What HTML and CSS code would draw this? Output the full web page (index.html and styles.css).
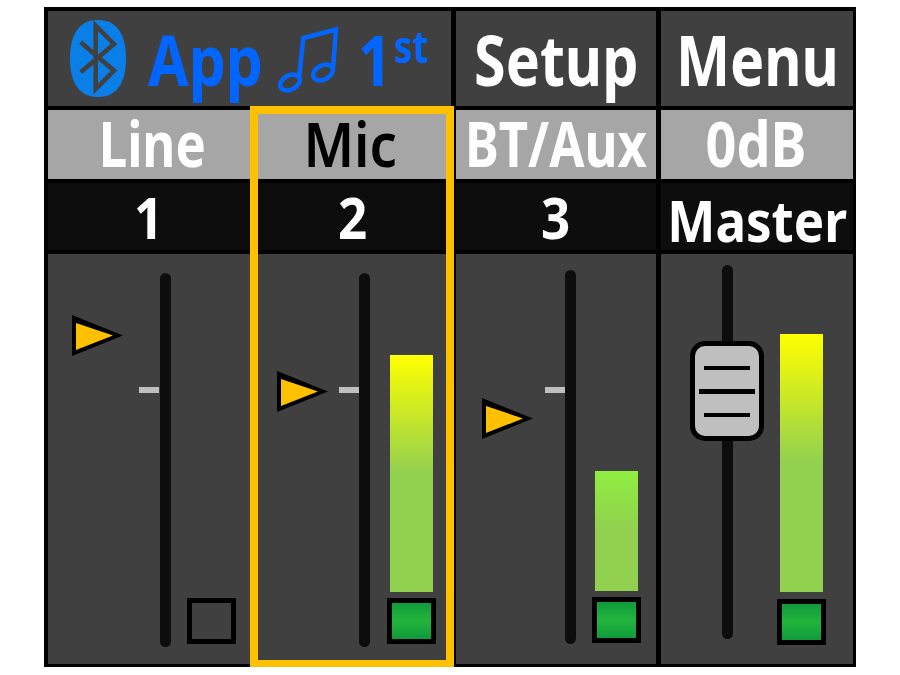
FILE: index.html
```html
<!DOCTYPE html>
<html lang="en">
<head>
    <meta charset="UTF-8">
    <title>Mixer</title>
    <link rel="stylesheet" href="styles.css">
</head>
<body>
    <div class="panel">
        <div class="cell top app">
            <svg class="bt" width="56" height="77" viewBox="0 0 56 77">
                <path d="M28 0C48 0 56 16 56 38.500C56 61 48 77 28 77C8 77 0 61 0 38.500C0 16 8 0 28 0Z" fill="#0b7fe8"/>
                <path d="M10.700 22.300L44 50.700L25.700 69V5.700L44 24L10.700 52.300" fill="none" stroke="#404040" stroke-width="4.500"/>
            </svg>
            <span class="app-word">App</span>
            <svg class="note" width="62" height="68" viewBox="0 0 62 68">
                <g fill="none" stroke="#0066ff" stroke-width="4.500">
                    <ellipse cx="12" cy="57.500" rx="10.500" ry="7" transform="rotate(-28 12 57.500)"/>
                    <ellipse cx="45" cy="47.500" rx="10.500" ry="7" transform="rotate(-28 45 47.500)"/>
                    <path d="M21 54L25.300 13L58 4.500L55 44"/>
                </g>
            </svg>
            <span class="app-num">1</span><span class="app-sup">st</span>
        </div>
        <div class="cell top"><span class="txt">Setup</span></div>
        <div class="cell top"><span class="txt">Menu</span></div>

        <div class="cell source"><span class="txt line">Line</span></div>
        <div class="cell source on"><span class="txt mic">Mic</span></div>
        <div class="cell source"><span class="txt">BT/Aux</span></div>
        <div class="cell source"><span class="txt odb">0dB</span></div>

        <div class="cell num"><span class="txt">1</span></div>
        <div class="cell num"><span class="txt">2</span></div>
        <div class="cell num"><span class="txt">3</span></div>
        <div class="cell num master"><span class="txt">Master</span></div>

        <div class="strip s1">
            <div class="track">
                <span class="tick"></span>
                <svg class="marker" style="left:-88px;top:42px" width="51" height="41" viewBox="0 0 51 41"><polygon points="0,0 51,20.500 0,41"/><polygon class="in" points="4,8 41,20.500 4,35"/></svg>
            </div>
            <div class="meter-col">
                <div class="led off"></div>
            </div>
        </div>

        <div class="strip s2">
            <div class="track">
                <span class="tick"></span>
                <svg class="marker" style="left:-82px;top:98px" width="51" height="41" viewBox="0 0 51 41"><polygon points="0,0 51,20.500 0,41"/><polygon class="in" points="4,8 41,20.500 4,35"/></svg>
            </div>
            <div class="meter-col">
                <div class="meter" style="height:237px"></div>
                <div class="led"></div>
            </div>
        </div>

        <div class="strip s3">
            <div class="track">
                <span class="tick" style="top:117px"></span>
                <svg class="marker" style="left:-83px;top:128px" width="51" height="41" viewBox="0 0 51 41"><polygon points="0,0 51,20.500 0,41"/><polygon class="in" points="4,8 41,20.500 4,35"/></svg>
            </div>
            <div class="meter-col">
                <div class="meter low" style="height:120px"></div>
                <div class="led"></div>
            </div>
        </div>

        <div class="strip s4">
            <div class="track">
                <div class="thumb">
                    <span></span>
                    <span class="mid"></span>
                    <span></span>
                </div>
            </div>
            <div class="meter-col">
                <div class="meter" style="height:258px"></div>
                <div class="led"></div>
            </div>
        </div>

        <div class="frame"></div>
    </div>
</body>
</html>
```

FILE: styles.css
```css
body {
    margin: 0;
    background-color: white;
    font-family: "Noto Sans", "Open Sans", sans-serif;
}
.panel {
    position: relative;
    width: 805px;
    margin: 7px 0 0 44px;
    padding: 4px 3px 3px 4px;
    display: grid;
    grid-template-columns: 202px 196px 200px 192px;
    grid-template-rows: 95px 69px 67px 410px;
    column-gap: 5px;
    row-gap: 4px;
    background-color: black;
}
.cell {
    display: flex;
    align-items: center;
    justify-content: center;
    font-weight: 700;
    line-height: 1;
    color: white;
    white-space: nowrap;
}
.txt {
    display: inline-block;
    transform: scaleX(.82);
}
.top {
    background-color: #404040;
    font-size: 70px;
}
.app {
    grid-column: 1 / 3;
    justify-content: flex-start;
    padding-left: 22px;
    color: #0066ff;
}
.bt {
    flex: none;
    margin-right: 22px;
}
.app-word {
    flex: none;
    width: 114px;
    transform: scaleX(.84);
    transform-origin: left;
}
.note {
    flex: none;
    margin: 0 18px 0 16px;
}
.app-num {
    flex: none;
    transform: scaleX(.84);
    transform-origin: left;
    width: 36px;
}
.app-sup {
    flex: none;
    font-size: 44px;
    margin-top: -26px;
    transform: scaleX(.84);
    transform-origin: left;
}
.source {
    padding-bottom: 4px;
    background-color: #a6a6a6;
    font-size: 62px;
}
.source.on {
    color: black;
}
.txt.line {
    margin-left: 7px;
}
.txt.mic {
    margin-right: 5px;
    font-weight: 600;
    transform: scaleX(.88);
}
.txt.odb {
    margin-right: 2px;
    transform: scaleX(.87);
}
.num {
    background-color: #0d0d0d;
    font-size: 58px;
}
.num .txt {
    transform: scaleX(.88);
}
.num.master {
    padding-top: 6px;
}
.strip {
    display: flex;
    align-items: flex-start;
    background-color: #404040;
}
.s1 { padding-left: 112px; }
.s2 { padding-left: 104px; }
.s3 { padding-left: 109px; }
.s4 { padding-left: 61px; }
.track {
    position: relative;
    width: 11px;
    height: 374px;
    margin-top: 19px;
    border-radius: 6px;
    background-color: #0d0d0d;
}
.s3 .track { margin-top: 16px; }
.s4 .track { margin-top: 11px; }
.tick {
    position: absolute;
    left: -20px;
    top: 114px;
    width: 20px;
    height: 6px;
    background-color: #bfbfbf;
}
.s1 .tick { left: -21px; }
.marker {
    position: absolute;
}
.marker polygon {
    fill: black;
}
.marker polygon.in {
    fill: #ffc000;
}
.meter-col {
    height: 390px;
    width: 49px;
    margin-left: 16px;
    display: flex;
    flex-direction: column;
    align-items: center;
    justify-content: flex-end;
    gap: 6px;
}
.s2 .meter-col { margin-left: 17px; }
.s3 .meter-col { height: 389px; }
.s4 .meter-col { height: 391px; margin-left: 44px; gap: 7px; }
.meter {
    width: 43px;
    background: linear-gradient(#ffff00, #92d050 50%);
}
.meter.low {
    background: linear-gradient(#8fee40, #92d050 50%);
}
.led {
    box-sizing: border-box;
    width: 49px;
    height: 46px;
    border: 5px solid black;
    background: linear-gradient(#0f9a3c, #22b53c 50%, #0f9a3c);
}
.led.off {
    background: none;
}
.thumb {
    position: absolute;
    left: -32px;
    top: 76px;
    box-sizing: border-box;
    width: 74px;
    height: 100px;
    border: 5px solid black;
    border-radius: 15px;
    background-color: #bfbfbf;
    display: flex;
    flex-direction: column;
    align-items: center;
    justify-content: center;
    gap: 19px;
}
.thumb span {
    width: 46px;
    height: 4px;
    background-color: black;
}
.thumb span.mid {
    width: 56px;
    height: 5px;
}
.frame {
    position: absolute;
    left: 206px;
    top: 99px;
    box-sizing: border-box;
    width: 204px;
    height: 562px;
    border: 8px solid #ffc000;
}
```
